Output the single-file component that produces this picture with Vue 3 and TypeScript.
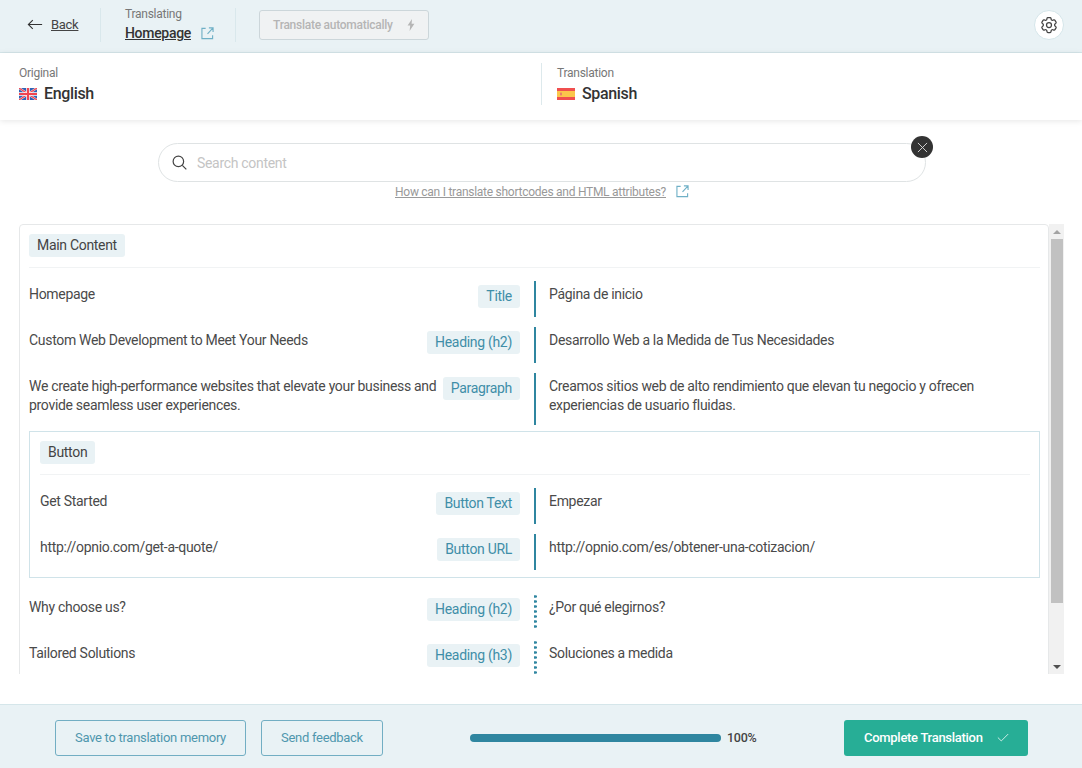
<template>
  <div class="page">
    <header class="topbar">
      <a class="back">
        <svg class="back-icon" viewBox="0 0 18 12" fill="none" stroke="#333" stroke-width="1.2">
          <path d="M17 6H1.5M6.5 1 1.5 6l5 5" />
        </svg>
        <span>Back</span>
      </a>
      <div class="crumb">
        <div class="crumb-label">Translating</div>
        <div class="crumb-title">
          <a>Homepage</a>
          <svg class="ext-icon" viewBox="0 0 14 14" fill="none" stroke="#6fb0c6" stroke-width="1.2">
            <path d="M5 1.5H1v11h11.5V9M7 7.5 12.5 1.5M8.5 1h4.5v4.5" />
          </svg>
        </div>
      </div>
      <div class="auto-wrap">
        <button class="auto-btn" disabled>
          Translate automatically
          <svg class="bolt" viewBox="0 0 8 12" fill="#b5b5b5"><path d="M5 0 .6 6.6h2.6L2.6 12 7.4 4.8H4.6z" /></svg>
        </button>
      </div>
      <button class="gear-btn" aria-label="Settings">
        <svg viewBox="0 0 24 24" fill="none" stroke="#444" stroke-width="1.5" stroke-linejoin="round">
          <path d="M9.594 3.94c.09-.542.56-.94 1.11-.94h2.593c.55 0 1.02.398 1.11.94l.213 1.281c.063.374.313.686.645.87.074.04.147.083.22.127.324.196.72.257 1.075.124l1.217-.456a1.125 1.125 0 011.37.49l1.296 2.247a1.125 1.125 0 01-.26 1.431l-1.003.827c-.293.24-.438.613-.431.992a6.759 6.759 0 010 .255c-.007.378.138.75.43.99l1.005.828c.424.35.534.954.26 1.43l-1.298 2.247a1.125 1.125 0 01-1.369.491l-1.217-.456c-.355-.133-.75-.072-1.076.124a6.57 6.57 0 01-.22.128c-.331.183-.581.495-.644.869l-.213 1.28c-.09.543-.56.941-1.11.941h-2.594c-.55 0-1.02-.398-1.11-.94l-.213-1.281c-.062-.374-.312-.686-.644-.87a6.52 6.52 0 01-.22-.127c-.325-.196-.72-.257-1.076-.124l-1.217.456a1.125 1.125 0 01-1.369-.49l-1.297-2.247a1.125 1.125 0 01.26-1.431l1.004-.827c.292-.24.437-.613.43-.992a6.932 6.932 0 010-.255c.007-.378-.138-.75-.43-.99l-1.004-.828a1.125 1.125 0 01-.26-1.43l1.297-2.247a1.125 1.125 0 011.37-.491l1.216.456c.356.133.751.072 1.076-.124.072-.044.146-.087.22-.128.332-.183.582-.495.644-.869l.214-1.281z" />
          <circle cx="12" cy="12" r="3" />
        </svg>
      </button>
    </header>

    <section class="langs">
      <div class="lang lang-source">
        <div class="lang-label">Original</div>
        <div class="lang-name">
          <svg class="flag" viewBox="0 0 18 12">
            <rect width="18" height="12" fill="#2f62b5" />
            <path d="M0 0 18 12M18 0 0 12" stroke="#fbe3e3" stroke-width="2.2" />
            <path d="M0 0 18 12M18 0 0 12" stroke="#f0444f" stroke-width="1.2" />
            <path d="M9 0v12M0 6h18" stroke="#fff" stroke-width="3.6" />
            <path d="M9 0v12M0 6h18" stroke="#f0444f" stroke-width="2.2" />
          </svg>
          English
        </div>
      </div>
      <div class="lang lang-target">
        <div class="lang-label">Translation</div>
        <div class="lang-name">
          <svg class="flag" viewBox="0 0 18 12">
            <rect width="18" height="12" fill="#f04f4f" />
            <rect y="3" width="18" height="6" fill="#fbc64b" />
            <rect x="3" y="4.6" width="2" height="2.8" fill="#e9806a" />
          </svg>
          Spanish
        </div>
      </div>
    </section>

    <section class="search-area">
      <div class="search">
        <svg class="search-icon" viewBox="0 0 16 16" fill="none" stroke="#444" stroke-width="1.3">
          <circle cx="6.8" cy="6.8" r="5.6" />
          <path d="m11 11 4.3 4.3" />
        </svg>
        <input placeholder="Search content" />
        <button class="clear" aria-label="Clear">
          <svg viewBox="0 0 12 12" fill="none" stroke="#ddd" stroke-width="1"><path d="m1 1 10 10M11 1 1 11" /></svg>
        </button>
      </div>
      <div class="help">
        <a>How can I translate shortcodes and HTML attributes?</a>
        <svg class="ext-icon" viewBox="0 0 14 14" fill="none" stroke="#6fb0c6" stroke-width="1.2">
          <path d="M5 1.5H1v11h11.5V9M7 7.5 12.5 1.5M8.5 1h4.5v4.5" />
        </svg>
      </div>
    </section>

    <div class="content">
      <main class="scroller">
        <div class="card">
          <div class="group-head"><span class="group-tag">Main Content</span></div>
          <div v-for="row in mainRows" :key="row.source" class="row">
            <div class="source">{{ row.source }}</div>
            <span class="type-tag">{{ row.type }}</span>
            <div class="target">{{ row.target }}</div>
          </div>

          <div class="nested">
            <div class="group-head"><span class="group-tag">Button</span></div>
            <div v-for="row in buttonRows" :key="row.source" class="row">
              <div class="source">{{ row.source }}</div>
              <span class="type-tag">{{ row.type }}</span>
              <div class="target">{{ row.target }}</div>
            </div>
          </div>

          <div v-for="row in restRows" :key="row.source" class="row">
            <div class="source">{{ row.source }}</div>
            <span class="type-tag">{{ row.type }}</span>
            <div class="target dotted">{{ row.target }}</div>
          </div>
        </div>
      </main>
      <div class="scrollbar">
        <span class="arrow arrow-up"></span>
        <div class="scroll-track"><div class="scroll-thumb"></div></div>
        <span class="arrow arrow-down"></span>
      </div>
    </div>

    <footer class="footer">
      <button class="outline save">Save to translation memory</button>
      <button class="outline feedback">Send feedback</button>
      <div class="progress">
        <div class="track"><div class="fill" :style="{ width: progress + '%' }"></div></div>
        <span class="percent">{{ progress }}%</span>
      </div>
      <button class="complete">
        Complete Translation
        <svg viewBox="0 0 14 10" fill="none" stroke="#d6f0ea" stroke-width="1.1"><path d="m1 5 4 4 8-8" /></svg>
      </button>
    </footer>
  </div>
</template>

<script setup lang="ts">
interface Row {
  source: string
  type: string
  target: string
}

const progress = 100

const mainRows: Row[] = [
  { source: 'Homepage', type: 'Title', target: 'Página de inicio' },
  {
    source: 'Custom Web Development to Meet Your Needs',
    type: 'Heading (h2)',
    target: 'Desarrollo Web a la Medida de Tus Necesidades',
  },
  {
    source: 'We create high-performance websites that elevate your business and provide seamless user experiences.',
    type: 'Paragraph',
    target: 'Creamos sitios web de alto rendimiento que elevan tu negocio y ofrecen experiencias de usuario fluidas.',
  },
]

const buttonRows: Row[] = [
  { source: 'Get Started', type: 'Button Text', target: 'Empezar' },
  {
    source: 'http://opnio.com/get-a-quote/',
    type: 'Button URL',
    target: 'http://opnio.com/es/obtener-una-cotizacion/',
  },
]

const restRows: Row[] = [
  { source: 'Why choose us?', type: 'Heading (h2)', target: '¿Por qué elegirnos?' },
  { source: 'Tailored Solutions', type: 'Heading (h3)', target: 'Soluciones a medida' },
]
</script>

<style>
html,
body {
  margin: 0;
  overflow: hidden;
}
</style>

<style scoped>
.page {
  display: flex;
  flex-direction: column;
  width: 1082px;
  height: 768px;
  background: #fff;
  color: #4a4a4a;
  font-family: Roboto, "Liberation Sans", sans-serif;
  font-size: 14px;
  overflow: hidden;
}
.page,
.page * {
  letter-spacing: -0.022em;
}

.topbar {
  display: flex;
  align-items: center;
  flex: none;
  height: 53px;
  box-sizing: border-box;
  padding-bottom: 2px;
  background: #e9f2f5;
  border-bottom: 1px solid #d5e6ea;
}
.back {
  display: flex;
  align-items: center;
  gap: 8px;
  width: 101px;
  height: 34px;
  box-sizing: border-box;
  padding: 0 0 2px 27px;
  border-right: 1px solid #d9e8ec;
  font-size: 13px;
  color: #444;
  text-decoration: underline;
}
.back-icon {
  width: 16px;
  height: 11px;
}
.crumb {
  width: 135px;
  height: 34px;
  box-sizing: border-box;
  padding-left: 24px;
  border-right: 1px solid #d9e8ec;
}
.crumb-label {
  font-size: 12px;
  line-height: 14px;
  margin-top: -1px;
  color: #777;
}
.crumb-title {
  display: flex;
  align-items: center;
  gap: 10px;
  margin-top: 3px;
  font-size: 14px;
  font-weight: 500;
  line-height: 18px;
  color: #333;
}
.crumb-title a {
  text-decoration: underline;
}
.ext-icon {
  width: 13px;
  height: 13px;
}
.auto-wrap {
  flex: 1;
  padding-left: 23px;
}
.auto-btn {
  display: flex;
  align-items: center;
  justify-content: space-between;
  width: 170px;
  height: 30px;
  padding: 0 13px;
  box-sizing: border-box;
  background: #f0f2f3;
  border: 1px solid #ccd6da;
  border-radius: 3px;
  color: #b5b5b5;
  font: 500 12px Roboto, sans-serif;
}
.bolt {
  width: 8px;
  height: 12px;
}
.gear-btn {
  display: flex;
  align-items: center;
  justify-content: center;
  width: 30px;
  height: 30px;
  margin-right: 18px;
  padding: 0;
  background: #fff;
  border: 1px solid #d5e6ea;
  border-radius: 50%;
}
.gear-btn svg {
  width: 20px;
  height: 20px;
}

.langs {
  position: relative;
  display: flex;
  flex: none;
  height: 67px;
  box-sizing: border-box;
  padding-top: 10px;
  background: #fff;
  box-shadow: 0 1px 6px rgba(0, 0, 0, 0.1);
}
.lang {
  height: 42px;
  box-sizing: border-box;
  padding-top: 1px;
}
.lang-source {
  width: 541px;
  padding-left: 19px;
}
.lang-target {
  padding-left: 15px;
  border-left: 1px solid #dde9ec;
}
.lang-label {
  font-size: 12px;
  line-height: 18px;
  color: #777;
}
.lang-name {
  display: flex;
  align-items: center;
  gap: 7px;
  margin-top: 2px;
  font-size: 16px;
  font-weight: 500;
  line-height: 20px;
  color: #333;
}
.flag {
  width: 18px;
  height: 12px;
}

.search-area {
  flex: none;
  padding: 23px 0 0 158px;
  height: 104px;
  box-sizing: border-box;
}
.search {
  position: relative;
  display: flex;
  align-items: center;
  width: 768px;
  height: 39px;
  box-sizing: border-box;
  padding-left: 13px;
  border: 1px solid #dfe3e4;
  border-radius: 20px;
}
.search-icon {
  width: 15px;
  height: 15px;
}
.search input {
  flex: 1;
  margin-left: 10px;
  margin-right: 20px;
  padding: 0;
  border: none;
  outline: none;
  background: none;
  font: 14px Roboto, sans-serif;
}
.search input::placeholder {
  color: #c4c4c4;
}
.clear {
  position: absolute;
  top: -8px;
  right: -8px;
  display: flex;
  align-items: center;
  justify-content: center;
  width: 22px;
  height: 22px;
  padding: 0;
  background: #333;
  border: none;
  border-radius: 50%;
}
.clear svg {
  width: 11px;
  height: 11px;
}
.help {
  display: flex;
  align-items: center;
  gap: 10px;
  margin-top: 2px;
  padding-left: 237px;
  height: 15px;
  font-size: 12px;
  color: #999;
}
.help a {
  text-decoration: underline;
}

.content {
  display: flex;
  flex: none;
  width: 1045px;
  height: 450px;
  margin-left: 19px;
}
.scroller {
  flex: 1;
  overflow: hidden;
}
.scrollbar {
  display: flex;
  flex-direction: column;
  flex: none;
  width: 15px;
  background: #f1f1f1;
}
.arrow {
  position: relative;
  flex: none;
  height: 15px;
}
.arrow::after {
  content: "";
  position: absolute;
  left: 4px;
  top: 5.5px;
  border-left: 4px solid transparent;
  border-right: 4px solid transparent;
}
.arrow-up::after {
  border-bottom: 4px solid #a3a3a3;
}
.arrow-down::after {
  border-top: 4px solid #505050;
}
.scroll-track {
  flex: 1;
}
.scroll-thumb {
  height: 364px;
  margin: 0 1px 0 2px;
  background: #c1c1c1;
}

.card {
  box-sizing: border-box;
  width: 1030px;
  padding: 9px 8px 14px 9px;
  border: 1px solid #e6e8e9;
  border-radius: 4px;
}
.group-head {
  padding-bottom: 10px;
  margin-bottom: 13px;
  border-bottom: 1px solid #f1f3f4;
}
.group-tag {
  display: block;
  width: fit-content;
  padding: 0 8px;
  line-height: 23px;
  background: #e9f2f5;
  border-radius: 3px;
  color: #444;
}
.row {
  display: grid;
  grid-template-columns: 1fr auto 506px;
  align-items: start;
  column-gap: 5px;
  margin-bottom: 10px;
  line-height: 19px;
}
.source {
  padding-top: 4px;
}
.type-tag {
  margin-top: 4px;
  margin-right: 9px;
  padding: 0 8px;
  line-height: 23px;
  background: #e9f2f5;
  border-radius: 3px;
  color: #3f8ea8;
}
.target {
  min-height: 36px;
  box-sizing: border-box;
  padding: 4px 40px 10px 13px;
  border-left: 2px solid #2f86a0;
}
.target.dotted {
  padding-left: 15px;
  border-left: none;
  background: radial-gradient(circle, #2f86a0 1.2px, transparent 1.6px) -0.5px 0 / 3px 5px repeat-y;
}
.nested {
  margin: -4px 0 16px;
  padding: 9px 9px 0 10px;
  border: 1px solid #d0e3e9;
}
.nested .row {
  grid-template-columns: 1fr auto 496px;
}
.nested .row:last-child {
  margin-bottom: 7px;
}

.footer {
  display: flex;
  align-items: center;
  flex: none;
  height: 64px;
  margin-top: 30px;
  box-sizing: border-box;
  padding: 2px 0 0 55px;
  background: #e9f2f5;
  border-top: 1px solid #d5e6ea;
}
.outline {
  height: 36px;
  box-sizing: border-box;
  background: none;
  border: 1px solid #72aec3;
  border-radius: 3px;
  color: #4f97ae;
  font: 13px Roboto, sans-serif;
}
.save {
  width: 191px;
}
.feedback {
  width: 122px;
  margin-left: 15px;
}
.progress {
  display: flex;
  align-items: center;
  gap: 6px;
  margin-left: 87px;
  width: 374px;
}
.track {
  width: 251px;
  height: 8px;
  border-radius: 4px;
  background: #d5e6ea;
}
.fill {
  height: 100%;
  border-radius: 4px;
  background: #2f86a0;
}
.percent {
  font-size: 12.5px;
  font-weight: 500;
  color: #444;
}
.complete {
  display: flex;
  align-items: center;
  justify-content: space-between;
  width: 184px;
  height: 36px;
  box-sizing: border-box;
  padding: 0 19px 0 20px;
  background: #27ae96;
  border: none;
  border-radius: 3px;
  color: #fff;
  font: 500 13px Roboto, sans-serif;
}
.complete svg {
  width: 12px;
  height: 9px;
}
</style>
